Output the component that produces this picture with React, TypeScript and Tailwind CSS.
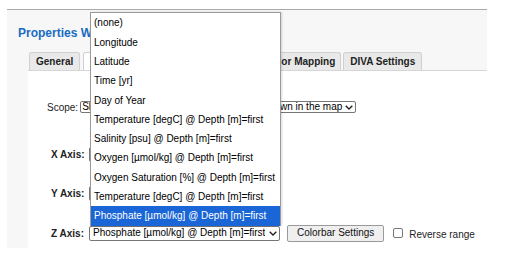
import React from "react";

const options = [
  "(none)",
  "Longitude",
  "Latitude",
  "Time [yr]",
  "Day of Year",
  "Temperature [degC] @ Depth [m]=first",
  "Salinity [psu] @ Depth [m]=first",
  "Oxygen [µmol/kg] @ Depth [m]=first",
  "Oxygen Saturation [%] @ Depth [m]=first",
  "Temperature [degC] @ Depth [m]=first",
  "Phosphate [µmol/kg] @ Depth [m]=first",
];

const selected = options.length - 1;

function Chevron() {
  return (
    <svg width="8" height="5" viewBox="0 0 8 5" className="shrink-0" aria-hidden="true">
      <path d="M0.7 0.7 L4 4 L7.3 0.7" fill="none" stroke="#222" strokeWidth="1.4" />
    </svg>
  );
}

function FakeSelect({ value, open }: { value: string; open?: boolean }) {
  return (
    <div className="relative">
      <div className="flex h-[15px] w-[191px] items-center justify-between gap-[2px] rounded-[2px] border border-[#767676] bg-white pl-[3px] pr-[2px]">
        <span className="overflow-hidden whitespace-nowrap leading-none">{value}</span>
        <Chevron />
      </div>
      {open && (
        <ul className="absolute bottom-full left-[1px] z-10 w-[191px] border border-b-0 border-[#9a9a9a] bg-white shadow-[1px_0_2px_rgba(0,0,0,0.15)]">
          {options.map((opt, i) => (
            <li
              key={i}
              className={
                i === selected
                  ? "flex h-[19.3px] items-center whitespace-nowrap bg-[#1a66d6] pl-[3px] text-white"
                  : "flex h-[19.3px] items-center whitespace-nowrap pl-[3px] text-black"
              }
            >
              {opt}
            </li>
          ))}
        </ul>
      )}
    </div>
  );
}

function Tab({ label, width, active }: { label: string; width?: string; active?: boolean }) {
  return (
    <div
      className={
        (active ? "bg-white " : "bg-[#e9e9e9] ") +
        "flex h-[18px] shrink-0 items-center justify-center overflow-hidden whitespace-nowrap rounded-t-[3px] border border-b-0 border-[#d0d0d0] px-[6px] font-bold text-[#222] " +
        (width ?? "")
      }
    >
      {label}
    </div>
  );
}

function AxisRow({ label, value, open }: { label: string; value: string; open?: boolean }) {
  return (
    <div className="flex h-[16px] items-center whitespace-nowrap pl-[23px]">
      <span className="w-[38px] shrink-0 font-bold text-[#222]">{label}</span>
      <FakeSelect value={value} open={open} />
      {open && (
        <>
          <button className="ml-[7px] h-[17px] shrink-0 rounded-[2px] border border-[#9a9a9a] bg-[#efefef] px-[9px] leading-none text-[#111]">
            Colorbar Settings
          </button>
          <span className="ml-[9px] h-[10px] w-[10px] shrink-0 rounded-[2px] border border-[#767676] bg-white" />
          <span className="ml-[6px] pt-[2px] text-[#222]">Reverse range</span>
        </>
      )}
    </div>
  );
}

export default function App() {
  return (
    <div className="h-[259px] w-[514px] bg-white pl-[7px] pt-[9px] font-['Liberation_Sans',Arial,sans-serif] text-[10px]">
      <div className="w-[480px] border-t border-[#a9a9a9] bg-[#f7f7f7]">
        <h2 className="whitespace-nowrap pl-[11px] pt-[16px] text-[12px] font-bold leading-[14px] text-[#176cc4]">
          Properties Window
        </h2>
        <div className="mt-[12px] flex gap-[2px] pl-[22px]">
          <Tab label="General" />
          <Tab label="Axes" width="w-[88px] ml-[1px]" active />
          <Tab label="Markers" width="w-[84px]" />
          <Tab label="Color Mapping" width="w-[82px]" />
          <Tab label="DIVA Settings" />
        </div>
        <div className="ml-[21px] border-t border-[#d6d6d6] bg-white pb-[7px]">
          <div className="mt-[30px] flex h-[12px] items-center whitespace-nowrap pl-[19px]">
            <span className="mr-[2px] text-[#222]">Scope:</span>
            <div className="flex h-[12px] items-center gap-[3px] rounded-[2px] border border-[#767676] bg-white pl-[1px] pr-[2px]">
              <span className="leading-none">Show samples from all stations currently shown in the map</span>
              <Chevron />
            </div>
          </div>
          <div className="mt-[33px]">
            <AxisRow label="X Axis:" value="Longitude" />
          </div>
          <div className="mt-[23px]">
            <AxisRow label="Y Axis:" value="Latitude" />
          </div>
          <div className="mt-[24px]">
            <AxisRow label="Z Axis:" value="Phosphate [µmol/kg] @ Depth [m]=first" open />
          </div>
        </div>
      </div>
    </div>
  );
}
